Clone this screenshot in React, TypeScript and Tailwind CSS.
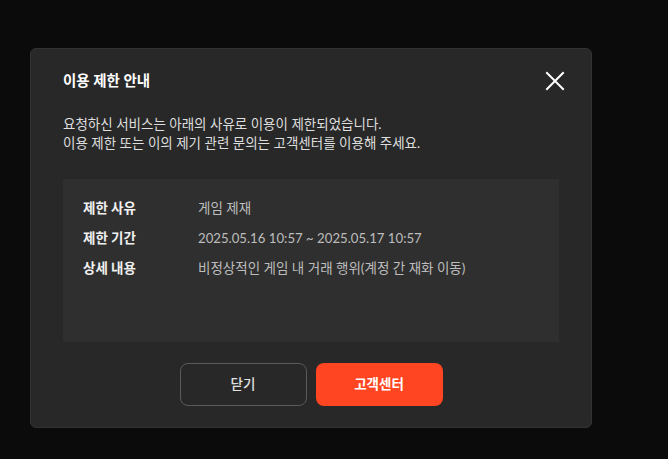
import React from "react";

export default function App() {
  const rows = [
    { label: "제한 사유", value: "게임 제재", ko: true },
    { label: "제한 기간", value: "2025.05.16 10:57 ~ 2025.05.17 10:57", ko: false },
    { label: "상세 내용", value: "비정상적인 게임 내 거래 행위(계정 간 재화 이동)", ko: true },
  ];
  return (
    <div
      className="min-h-screen w-full bg-[#0b0b0b] pt-[48px] pl-[30px]"
      style={{ fontFamily: "Lato, 'Noto Sans CJK KR', sans-serif" }}
    >
      <div className="w-[562px] h-[380px] rounded-[6px] bg-[#282828] border border-[#333] flex flex-col">
        <div className="flex items-center justify-between pl-[32px] pr-[24px] pt-[20px]">
          <h2 className="text-[14.5px] leading-[22px] font-bold text-white">이용 제한 안내</h2>
          <button className="w-[24px] h-[24px] flex items-center justify-center text-white">
            <svg width="20" height="20" viewBox="0 0 20 20" fill="none">
              <path d="M2 2L18 18M18 2L2 18" stroke="currentColor" strokeWidth="2" strokeLinecap="square" />
            </svg>
          </button>
        </div>
        <div className="px-[32px]">
          <p className="mt-[22px] text-[13.5px] leading-[19px] text-[#dedede]">
            요청하신 서비스는 아래의 사유로 이용이 제한되었습니다.
            <br />
            이용 제한 또는 이의 제기 관련 문의는 고객센터를 이용해 주세요.
          </p>
          <div className="mt-[26px] h-[163px] bg-[#2f2f2f] pl-[20px] pt-[19px] flex flex-col gap-[10px]">
            {rows.map((r) => (
              <div key={r.label} className="flex leading-[20px]">
                <span className="w-[115px] text-[13.5px] font-bold text-[#f0f0f0]">{r.label}</span>
                <span className={(r.ko ? "text-[13.5px]" : "text-[13.2px]") + " text-[#bdbdbd]"}>{r.value}</span>
              </div>
            ))}
          </div>
          <div className="mt-[21px] flex justify-center gap-[9px]">
            <button className="w-[127px] h-[43px] rounded-[8px] border border-[#5a5a5a] text-[13.5px] text-[#e0e0e0] font-medium">
              닫기
            </button>
            <button className="w-[127px] h-[43px] rounded-[8px] bg-[#ff4521] text-[13.5px] text-white font-semibold">
              고객센터
            </button>
          </div>
        </div>
      </div>
    </div>
  );
}
